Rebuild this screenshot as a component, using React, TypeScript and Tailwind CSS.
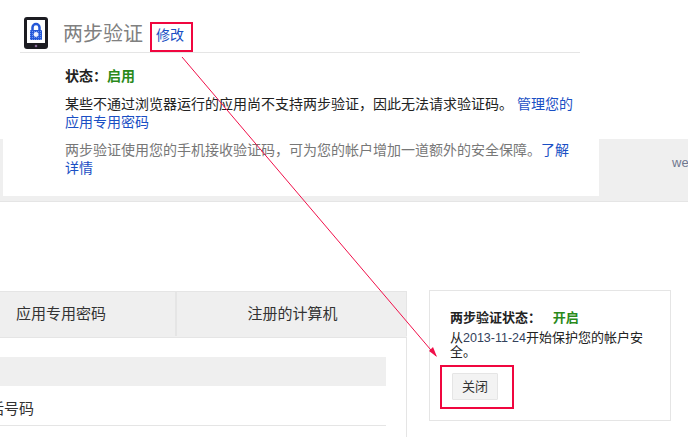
const cjk = "font-['Liberation_Sans','Noto_Sans_CJK_SC',sans-serif]";

function TabletLockIcon() {
  return (
    <svg width="24" height="33" viewBox="0 0 24 33" className="shrink-0">
      <defs>
        <pattern id="lock-dots" width="2" height="2" patternUnits="userSpaceOnUse">
          <rect width="2" height="2" fill="#2558d8" />
          <rect width="1" height="1" fill="#6f96ee" />
        </pattern>
      </defs>
      <rect x="0" y="0" width="24" height="32" rx="3" fill="#1c1c22" />
      <rect x="3" y="3" width="18" height="23" fill="#fff" />
      <path d="M8.5 14v-3.5a3.5 3.5 0 0 1 7 0v3.5" fill="none" stroke="#2558d8" strokeWidth="2.5" />
      <rect x="6" y="13" width="12" height="10" rx="1" fill="url(#lock-dots)" />
      <circle cx="12" cy="17.5" r="2.4" fill="#eef2ff" />
      <circle cx="12" cy="29" r="1.3" fill="#8a6a9a" />
    </svg>
  );
}

function Annotations() {
  return (
    <>
      <div className="absolute left-[150px] top-[22px] h-[30px] w-[43px] border-2 border-[#f0063f]" />
      <div className="absolute left-[440px] top-[365px] h-[44px] w-[74px] border-2 border-[#f0063f]" />
      <svg width="688" height="437" className="absolute left-0 top-0 pointer-events-none">
        <line x1="182" y1="57" x2="436" y2="356" stroke="#f0104a" strokeWidth="1" />
        <path d="M437 357 L429 351 L433 347 Z" fill="#f0104a" />
      </svg>
    </>
  );
}

export default function App() {
  return (
    <div className={`relative h-[437px] w-[688px] overflow-hidden bg-white text-[14px] leading-[18px] text-[#222] ${cjk}`}>
      {/* top block */}
      <div className="h-[139px] pl-[20px] pt-[17px]">
        <div className="flex h-[36px] w-[560px] items-start border-b border-[#e5e5e5] pl-[4px]">
          <TabletLockIcon />
          <span className="ml-[15px] mt-[5px] text-[20px] leading-[24px] text-[#808080]">两步验证</span>
          <a className="ml-[13px] mt-[9px] text-[#1a4fc4]">修改</a>
        </div>
        <div className="w-[510px] pl-[45px] pt-[14px]">
          <div className="font-bold">
            状态：<span className="text-[#2a8a1a]">启用</span>
          </div>
          <p className="mt-[10px] w-[510px]">
            某些不通过浏览器运行的应用尚不支持两步验证，因此无法请求验证码。 <a className="text-[#1a4fc4]">管理您的应用专用密码</a>
          </p>
        </div>
      </div>

      {/* grey band */}
      <div className="flex h-[63px] border-b border-[#e5e5e5] bg-[#efefef] pb-[5px] pl-[3px]">
        <div className="h-[57px] w-[596px] shrink-0 bg-white pl-[62px] pt-[2px]">
          <p className="w-[510px] text-[#777]">
            两步验证使用您的手机接收验证码，可为您的帐户增加一道额外的安全保障。<a className="text-[#1a4fc4]">了解详情</a>
          </p>
        </div>
        <span className="ml-[73px] mt-[15px] text-[13px] text-[#6f7890]">we</span>
      </div>

      {/* lower block */}
      <div className="flex items-start pt-[89px]">
        <div className="w-[407px] shrink-0">
          <div className="flex h-[47px] border-y border-[#e5e5e5] bg-[#efefef] pb-[1px] text-[15px] text-[#333]">
            <div className="-ml-[53px] flex w-[230px] shrink-0 items-center justify-center border-r-2 border-[#e5e5e5]">应用专用密码</div>
            <div className="flex flex-1 items-center justify-center border-r border-[#e5e5e5] pl-[2px]">注册的计算机</div>
          </div>
          <div className="h-[100px] border-r border-[#e5e5e5] pr-[20px] pt-[19px]">
            <div className="h-[29px] bg-[#efefef]" />
            <div className="flex h-[40px] items-center overflow-hidden border-b border-[#e5e5e5] pt-[6px] text-[15px] text-[#333]">
              <span className="-ml-[11px]">话号码</span>
            </div>
          </div>
        </div>
        <div className="-mt-px ml-[22px] h-[131px] w-[242px] shrink-0 border border-[#e5e5e5] pl-[20px] pt-[19px] text-[13px] leading-[13px] text-[#222]">
          <div className="font-bold leading-[16px]">
            两步验证状态： <span className="ml-[8px] text-[#2a8a1a]">开启</span>
          </div>
          <p className="mt-[5px] w-[198px]">从<span className="text-[12.5px] text-[#33415c]">2013-11-24</span>开始保护您的帐户安全。</p>
          <button className="ml-[2px] mt-[15px] h-[27px] w-[46px] rounded-[1px] border border-[#e5e5e5] bg-[#f3f3f3] text-[#333]">关闭</button>
        </div>
      </div>

      <Annotations />
    </div>
  );
}
